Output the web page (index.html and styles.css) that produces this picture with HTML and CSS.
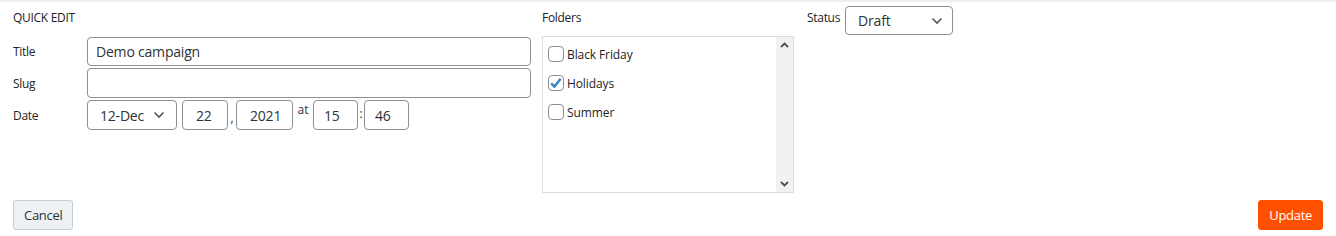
FILE: index.html
```html
<!DOCTYPE html>
<html lang="en">
<head>
    <meta charset="UTF-8">
    <meta name="viewport" content="width=device-width, initial-scale=1.0">
    <title>Quick Edit</title>
    <link rel="stylesheet" href="styles.css">
</head>
<body>
    <div class="quick-edit">
        <div class="edit-row">
            <div class="col-main">
                <div class="legend">QUICK EDIT</div>
                <div class="field">
                    <label for="title">Title</label>
                    <input class="text-input wide" type="text" id="title" value="Demo campaign">
                </div>
                <div class="field">
                    <label for="slug">Slug</label>
                    <input class="text-input wide slug" type="text" id="slug" value="">
                </div>
                <div class="field">
                    <label>Date</label>
                    <div class="date-fields">
                        <span class="select-wrap month">
                            <select>
                                <option>12-Dec</option>
                            </select>
                            <svg class="chevron" width="12" height="8" viewBox="0 0 12 8"><path d="M1.5 1.5 L6 6 L10.5 1.5" fill="none" stroke="#50575e" stroke-width="1.6"/></svg>
                        </span>
                        <input class="text-input day" type="text" value="22">
                        <span class="sep comma">,</span>
                        <input class="text-input year" type="text" value="2021">
                        <span class="sep at">at</span>
                        <input class="text-input hour" type="text" value="15">
                        <span class="sep colon">:</span>
                        <input class="text-input minute" type="text" value="46">
                    </div>
                </div>
            </div>

            <div class="col-folders">
                <div class="legend">Folders</div>
                <div class="folder-box">
                    <ul class="folder-list">
                        <li><span class="check"></span>Black Friday</li>
                        <li><span class="check checked"><svg width="14" height="14" viewBox="0 0 14 14"><path d="M2.2 7.4 L5.4 10.6 L11.6 2.8" fill="none" stroke="#3582c4" stroke-width="2.4"/></svg></span>Holidays</li>
                        <li><span class="check"></span>Summer</li>
                    </ul>
                    <div class="scrollbar">
                        <svg width="9" height="6" viewBox="0 0 9 6"><path d="M1 5 L4.5 1.5 L8 5" fill="none" stroke="#505050" stroke-width="1.8"/></svg>
                        <svg width="9" height="6" viewBox="0 0 9 6"><path d="M1 1 L4.5 4.5 L8 1" fill="none" stroke="#505050" stroke-width="1.8"/></svg>
                    </div>
                </div>
            </div>

            <div class="col-status">
                <label>Status</label>
                <span class="select-wrap status">
                    <select>
                        <option>Draft</option>
                    </select>
                    <svg class="chevron" width="12" height="8" viewBox="0 0 12 8"><path d="M1.5 1.5 L6 6 L10.5 1.5" fill="none" stroke="#50575e" stroke-width="1.6"/></svg>
                </span>
            </div>
        </div>

        <div class="actions">
            <button class="btn cancel">Cancel</button>
            <button class="btn update">Update</button>
        </div>
    </div>
</body>
</html>
```

FILE: styles.css
```css
body {
    margin: 0;
    font-family: "Open Sans", "Noto Sans", sans-serif;
    color: #1d2327;
    background: #fff;
}
.quick-edit {
    border-top: 2px solid #f0f0f1;
    padding: 0 13px 0 13px;
    height: 234px;
}
.edit-row {
    display: flex;
    align-items: flex-start;
}
.col-main {
    width: 518px;
    margin-right: 11px;
}
.legend {
    font-size: 12px;
    line-height: 16px;
    padding-top: 8px;
    height: 27px;
    color: #1d2327;
    letter-spacing: -0.3px;
}
.col-folders .legend {
    height: 26px;
}
.field {
    display: flex;
    align-items: center;
    margin-bottom: 2px;
}
.field label {
    width: 74px;
    font-size: 12px;
    letter-spacing: -0.3px;
    flex: none;
}
.text-input {
    font-family: inherit;
    font-size: 14px;
    color: #2c3338;
    height: 30px;
    box-sizing: border-box;
    border: 1px solid #8c8f94;
    border-radius: 4px;
    padding: 0 8px;
    background: #fff;
    letter-spacing: -0.2px;
}
.wide {
    width: 444px;
    height: 29px;
}
.slug {
    height: 30px;
}
.date-fields {
    display: flex;
    align-items: center;
    height: 30px;
}
.select-wrap {
    position: relative;
    display: inline-block;
}
.select-wrap select {
    appearance: none;
    -webkit-appearance: none;
    font-family: inherit;
    font-size: 14px;
    color: #2c3338;
    height: 30px;
    border: 1px solid #8c8f94;
    border-radius: 4px;
    background: #fff;
    padding: 0 12px;
    letter-spacing: -0.2px;
}
.select-wrap .chevron {
    position: absolute;
    right: 12px;
    top: 11px;
    pointer-events: none;
}
.month select {
    width: 90px;
}
.day {
    width: 46px;
    margin-left: 5px;
    padding-left: 13px;
}
.year {
    width: 57px;
    padding-left: 13px;
}
.hour {
    width: 45px;
    padding-left: 10px;
}
.minute {
    width: 45px;
    padding-left: 10px;
}
.sep {
    font-size: 12px;
    color: #2c3338;
    align-self: flex-start;
}
.comma {
    width: 8px;
    text-align: center;
    padding-top: 9px;
}
.at {
    width: 20px;
    text-align: center;
    padding-top: 1px;
}
.colon {
    width: 6px;
    text-align: center;
    padding-top: 5px;
}
.col-folders {
    width: 252px;
    margin-right: 13px;
}
.folder-box {
    display: flex;
    height: 157px;
    box-sizing: border-box;
    border: 1px solid #dcdcde;
}
.folder-list {
    list-style: none;
    margin: 0;
    padding: 9px 0 0 5px;
    flex: 1;
}
.folder-list li {
    display: flex;
    align-items: center;
    font-size: 12px;
    height: 16px;
    margin-bottom: 13px;
    letter-spacing: -0.1px;
}
.check {
    width: 16px;
    height: 16px;
    box-sizing: border-box;
    border: 1px solid #8c8f94;
    border-radius: 4px;
    margin-right: 3px;
    display: flex;
    align-items: center;
    justify-content: center;
    background: #fff;
}
.scrollbar {
    width: 17px;
    background: #f1f1f1;
    display: flex;
    flex-direction: column;
    justify-content: space-between;
    align-items: center;
    padding: 5px 0 5px;
}
.col-status {
    display: flex;
    align-items: flex-start;
    padding-top: 4px;
}
.col-status label {
    font-size: 12px;
    padding-top: 3px;
    margin-right: 5px;
    letter-spacing: -0.3px;
}
.status select {
    width: 108px;
    height: 29px;
    padding: 0 12px;
}
.status .chevron {
    right: 10px;
}
.actions {
    display: flex;
    justify-content: space-between;
    margin-top: 7px;
}
.btn {
    font-family: inherit;
    font-size: 13px;
    height: 30px;
    border-radius: 3px;
    padding: 0 10px;
    cursor: pointer;
    letter-spacing: -0.3px;
}
.cancel {
    background: #eef1f4;
    border: 1px solid #c6ccd3;
    color: #2c3338;
}
.update {
    background: #ff5000;
    border: 1px solid #ff5000;
    color: #fff;
}
```
